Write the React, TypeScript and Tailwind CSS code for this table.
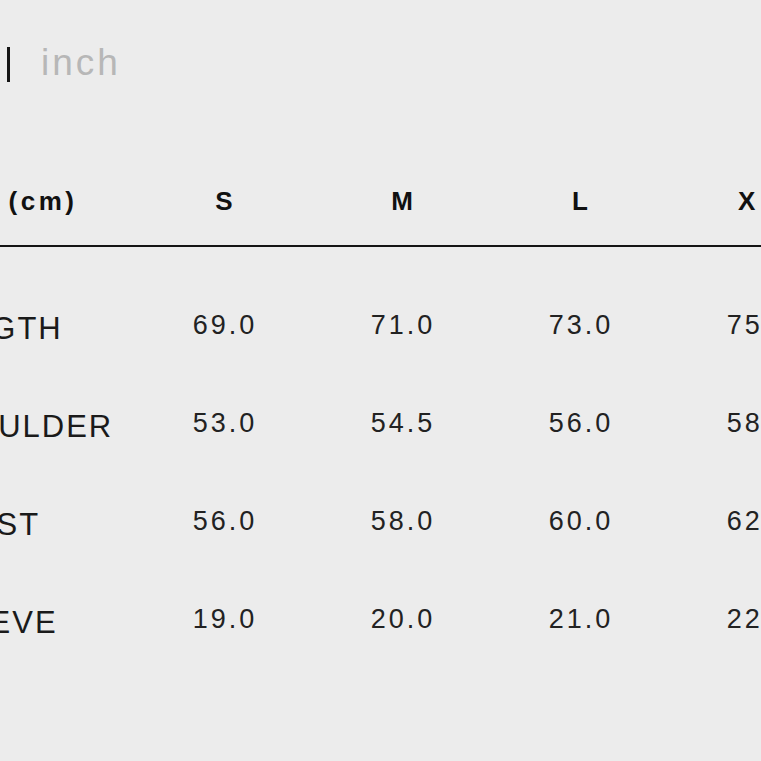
import React from "react";

const sizes = ["S", "M", "L", "XL"];

const rows = [
  { label: "LENGTH", values: ["69.0", "71.0", "73.0", "75.0"] },
  { label: "SHOULDER", values: ["53.0", "54.5", "56.0", "58.0"] },
  { label: "CHEST", values: ["56.0", "58.0", "60.0", "62.0"] },
  { label: "SLEEVE", values: ["19.0", "20.0", "21.0", "22.0"] },
];

export default function App() {
  return (
    <div
      className="w-[761px] h-[761px] overflow-hidden bg-[#ececec] text-[#1f1f1f]"
      style={{ fontFamily: '"Liberation Sans", Arial, sans-serif' }}
    >
      {/* unit toggle, cropped on the left */}
      <div className="mt-[47px] h-[35px] flex items-center -ml-[60px]">
        <span className="text-[37px] leading-[35px] tracking-[3px] text-[#111] w-[60px] -mt-1">
          cm
        </span>
        <div className="ml-[7px] w-[3px] h-[35px] bg-[#151515]" />
        <span className="ml-[31px] -mt-1 text-[37px] leading-[35px] tracking-[3px] text-[#b7b7b7]">
          inch
        </span>
      </div>

      {/* size table */}
      <div className="mt-[89px] -ml-[68px] w-[915px]">
        <div className="grid grid-cols-[203px_178px_178px_178px_178px] h-[60px] items-center">
          <div className="-ml-[6px] whitespace-nowrap text-[26px] font-bold tracking-[3.5px] text-[#111]">
            SIZE (cm)
          </div>
          {sizes.map((s) => (
            <div
              key={s}
              className="text-center text-[26px] font-bold tracking-[7px] text-[#111]"
            >
              <span className="ml-[7px]">{s}</span>
            </div>
          ))}
        </div>
        <div className="mt-[14px] h-[2px] bg-[#141414]" />

        <div className="mt-[29px]">
          {rows.map((r) => (
            <div
              key={r.label}
              className="grid grid-cols-[203px_178px_178px_178px_178px] h-[98px] items-center"
            >
              <div className="mt-2 -ml-[7px] whitespace-nowrap text-[31px] tracking-[2px] text-[#1a1a1a]">
                {r.label}
              </div>
              {r.values.map((v, i) => (
                <div
                  key={i}
                  className="text-center text-[27px] tracking-[3px] text-[#222]"
                >
                  <span className="ml-[2px]">{v}</span>
                </div>
              ))}
            </div>
          ))}
        </div>
      </div>
    </div>
  );
}
